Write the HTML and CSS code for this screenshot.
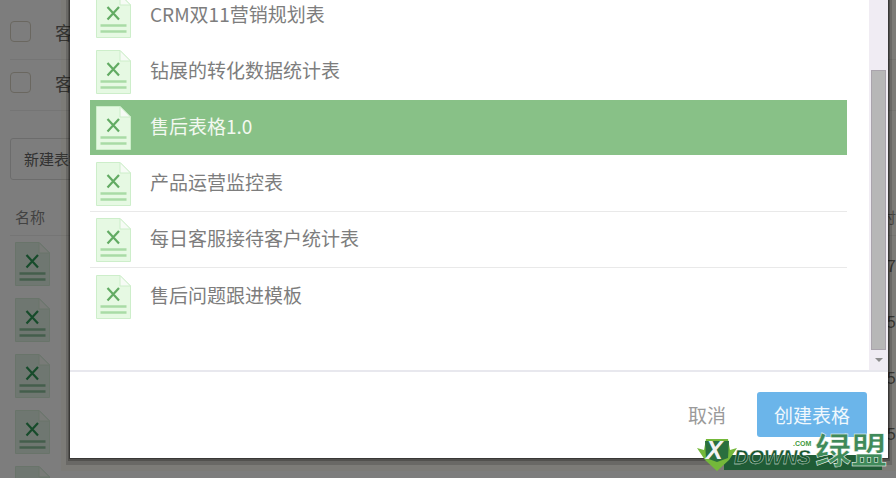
FILE: index.html
```html
<!DOCTYPE html>
<html lang="en">

<head>
    <meta charset="UTF-8">
    <meta name="viewport" content="width=device-width, initial-scale=1.0">
    <title>选择表格模板</title>
    <link rel="stylesheet" href="styles.css">
</head>

<body>
    <svg class="defs" width="0" height="0">
        <symbol id="xls" viewBox="0 0 35 44">
            <path class="xls-sheet" d="M.5.5H24L34.500 11V43.500H.5Z" />
            <path class="xls-fold" d="M24 .5V11H34.500Z" />
            <path class="xls-x" d="M11.500 13L23 25.500M23 13L11.500 25.500" />
            <path class="xls-line" d="M4.500 31.500H30.500M4.500 37.500H30.500" />
        </symbol>
    </svg>

    <div class="page">
        <div class="check-row"><span class="checkbox"></span><span>客服表格</span></div>
        <div class="check-row"><span class="checkbox"></span><span>客户表格</span></div>
        <div class="new-btn">新建表格</div>
        <div class="table-head"><span>名称</span><span>时</span></div>
        <div class="file-row"><svg class="file-icon"><use href="#xls" /></svg><span>7</span></div>
        <div class="file-row"><svg class="file-icon"><use href="#xls" /></svg><span>5</span></div>
        <div class="file-row"><svg class="file-icon"><use href="#xls" /></svg><span>5</span></div>
        <div class="file-row"><svg class="file-icon"><use href="#xls" /></svg><span>5</span></div>
        <div class="file-row"><svg class="file-icon"><use href="#xls" /></svg></div>
    </div>

    <div class="overlay"></div>

    <div class="modal">
        <div class="modal-body">
            <ul class="list">
                <li class="list-item"><svg class="file-icon"><use href="#xls" /></svg><span class="item-name">CRM双11营销规划表</span></li>
                <li class="list-item"><svg class="file-icon"><use href="#xls" /></svg><span class="item-name">钻展的转化数据统计表</span></li>
                <li class="list-item active"><svg class="file-icon"><use href="#xls" /></svg><span class="item-name">售后表格1.0</span></li>
                <li class="list-item"><svg class="file-icon"><use href="#xls" /></svg><span class="item-name">产品运营监控表</span></li>
                <li class="list-item"><svg class="file-icon"><use href="#xls" /></svg><span class="item-name">每日客服接待客户统计表</span></li>
                <li class="list-item"><svg class="file-icon"><use href="#xls" /></svg><span class="item-name">售后问题跟进模板</span></li>
            </ul>
            <div class="scrollbar">
                <div class="thumb"></div>
                <div class="arrow"></div>
            </div>
        </div>
        <div class="modal-footer">
            <span class="cancel">取消</span>
            <button class="create-btn">创建表格</button>
        </div>
    </div>

    <div class="watermark">
        <span class="wm-bar"></span>
        <svg class="wm-shield" width="40" height="34" viewBox="0 0 40 34">
            <path d="M0 10L7 12L9 1H31L33 12L40 10L32 22L20 33L8 22Z" fill="#74b83a" />
            <path d="M8 3H32L31 20L20 24L9 20Z" fill="#2a6f3e" />
        </svg>
        <span class="wm-x">X</span>
        <span class="wm-com">.COM</span>
        <span class="wm-downs">DOWNS</span>
        <span class="wm-cn">绿盟</span>
    </div>
</body>

</html>
```

FILE: styles.css
```css
* {
    box-sizing: border-box;
}

body {
    margin: 0;
    width: 896px;
    height: 478px;
    overflow: hidden;
    position: relative;
    background-color: #fff;
    font-family: "Noto Sans CJK SC", "Liberation Sans", sans-serif;
    color: #666;
}

.defs {
    position: absolute;
}

.file-icon {
    width: 35px;
    height: 44px;
    flex: none;
}

.xls-sheet {
    fill: var(--sheet, #e6f9e3);
    stroke: var(--edge, #cdeeca);
}

.xls-fold {
    fill: #f6fbf5;
    stroke: var(--edge, #cdeeca);
}

.xls-x {
    fill: none;
    stroke: var(--mark, #62ab63);
    stroke-width: 2.2;
}

.xls-line {
    fill: none;
    stroke: var(--line, #a9dba6);
    stroke-width: 2.4;
}

/* page behind the dialog */
.page {
    height: 478px;
    overflow: hidden;
    padding: 9px 0 0 10px;
}

.check-row {
    height: 51px;
    display: flex;
    align-items: center;
    gap: 24px;
    padding-bottom: 5px;
    font-size: 18px;
    border-bottom: 1px solid #eee;
}

.checkbox {
    width: 21px;
    height: 21px;
    border: 1px solid #d8d2c4;
    border-radius: 4px;
}

.new-btn {
    margin-top: 27px;
    width: 120px;
    height: 42px;
    line-height: 40px;
    padding-left: 13px;
    font-size: 15px;
    border: 1px solid #ddd;
    border-radius: 3px;
}

.table-head {
    display: flex;
    justify-content: space-between;
    margin-top: 26px;
    padding: 0 0 7px 5px;
    font-size: 15px;
    line-height: 22px;
    color: #888;
    border-bottom: 1px solid #eee;
}

.file-row {
    height: 56px;
    display: flex;
    justify-content: space-between;
    align-items: center;
    padding-left: 5px;
    font-size: 17px;
    --sheet: #e2f3e6;
    --edge: #d6ecd8;
    --mark: #2f9a58;
    --line: #8cc09c;
}

.overlay {
    position: absolute;
    inset: 0;
    background-color: rgba(0, 0, 0, .51);
}

/* dialog */
.modal {
    position: absolute;
    left: 70px;
    top: 0;
    width: 818px;
    height: 458px;
    display: flex;
    flex-direction: column;
    background-color: #fff;
    box-shadow: 0 0 0 1px rgba(0, 0, 0, .3), 0 1px 0 2px rgba(0, 0, 0, .22), 0 3px 0 4px rgba(0, 0, 0, .15), 0 4px 0 9px rgba(120, 105, 70, .1);
    overflow: hidden;
}

.modal-body {
    height: 370px;
    display: flex;
    overflow: hidden;
}

.list {
    flex: 1;
    list-style: none;
    margin: -12px 0 0;
    padding: 0 22px 0 20px;
}

.list-item {
    height: 56px;
    display: flex;
    align-items: center;
    gap: 19px;
    padding: 1px 0 0 6px;
    font-size: 19px;
    color: #7d7d7d;
    border-bottom: 1px solid #e9e9e9;
}

.item-name {
    margin-bottom: 5px;
}

.list-item:nth-child(-n+2) {
    border-bottom-color: transparent;
}

.list-item:last-child {
    border-bottom: 0;
}

.list-item.active {
    background-color: #88c187;
    color: #f2f8f0;
    border-bottom-color: transparent;
    background-clip: padding-box;
}

.scrollbar {
    width: 19px;
    background-color: #f0ecf3;
    padding: 70px 2px 0;
}

.thumb {
    height: 280px;
    background-color: #b7b7b7;
    border: 1px solid #aaa4ad;
}

.arrow {
    width: 0;
    margin: 8px auto 0;
    border-top: 4px solid #8c8c8c;
    border-left: 4px solid transparent;
    border-right: 4px solid transparent;
}

.modal-footer {
    height: 88px;
    display: flex;
    justify-content: flex-end;
    align-items: center;
    gap: 31px;
    padding: 0 21px 2px 0;
    border-top: 2px solid #e8e8ee;
}

.cancel {
    font-size: 19px;
    color: #9a9a9a;
}

.create-btn {
    width: 110px;
    height: 45px;
    padding: 0;
    border: 0;
    border-radius: 3px;
    font: inherit;
    font-size: 19px;
    color: #f0f8fd;
    background-color: #6bb5ea;
}

/* site watermark over the bottom corner */
.watermark {
    position: absolute;
    left: 696px;
    top: 432px;
    width: 200px;
    height: 46px;
}

.wm-shield {
    position: absolute;
    left: 1px;
    top: 6px;
}

.wm-x {
    position: absolute;
    left: 10px;
    top: 5px;
    font: italic bold 25px/26px "Liberation Sans", sans-serif;
    color: #f2f2f2;
}

.wm-bar {
    position: absolute;
    left: 28px;
    top: 23px;
    width: 158px;
    height: 15px;
    background-color: #1f5c36;
}

.wm-com {
    position: absolute;
    left: 97px;
    top: 8px;
    font: bold 7px/8px "Liberation Sans", sans-serif;
    color: #3f9a3c;
}

.wm-downs {
    position: absolute;
    left: 38px;
    top: 16px;
    font: italic 900 20px/18px "Liberation Sans", sans-serif;
    color: #17562f;
    -webkit-text-stroke: .3px #fff;
}

.wm-cn {
    position: absolute;
    left: 119px;
    top: -4px;
    font-size: 36px;
    line-height: 40px;
    font-weight: 700;
    color: #3f8a5a;
    -webkit-text-stroke: .5px #fff;
    white-space: nowrap;
}
```
